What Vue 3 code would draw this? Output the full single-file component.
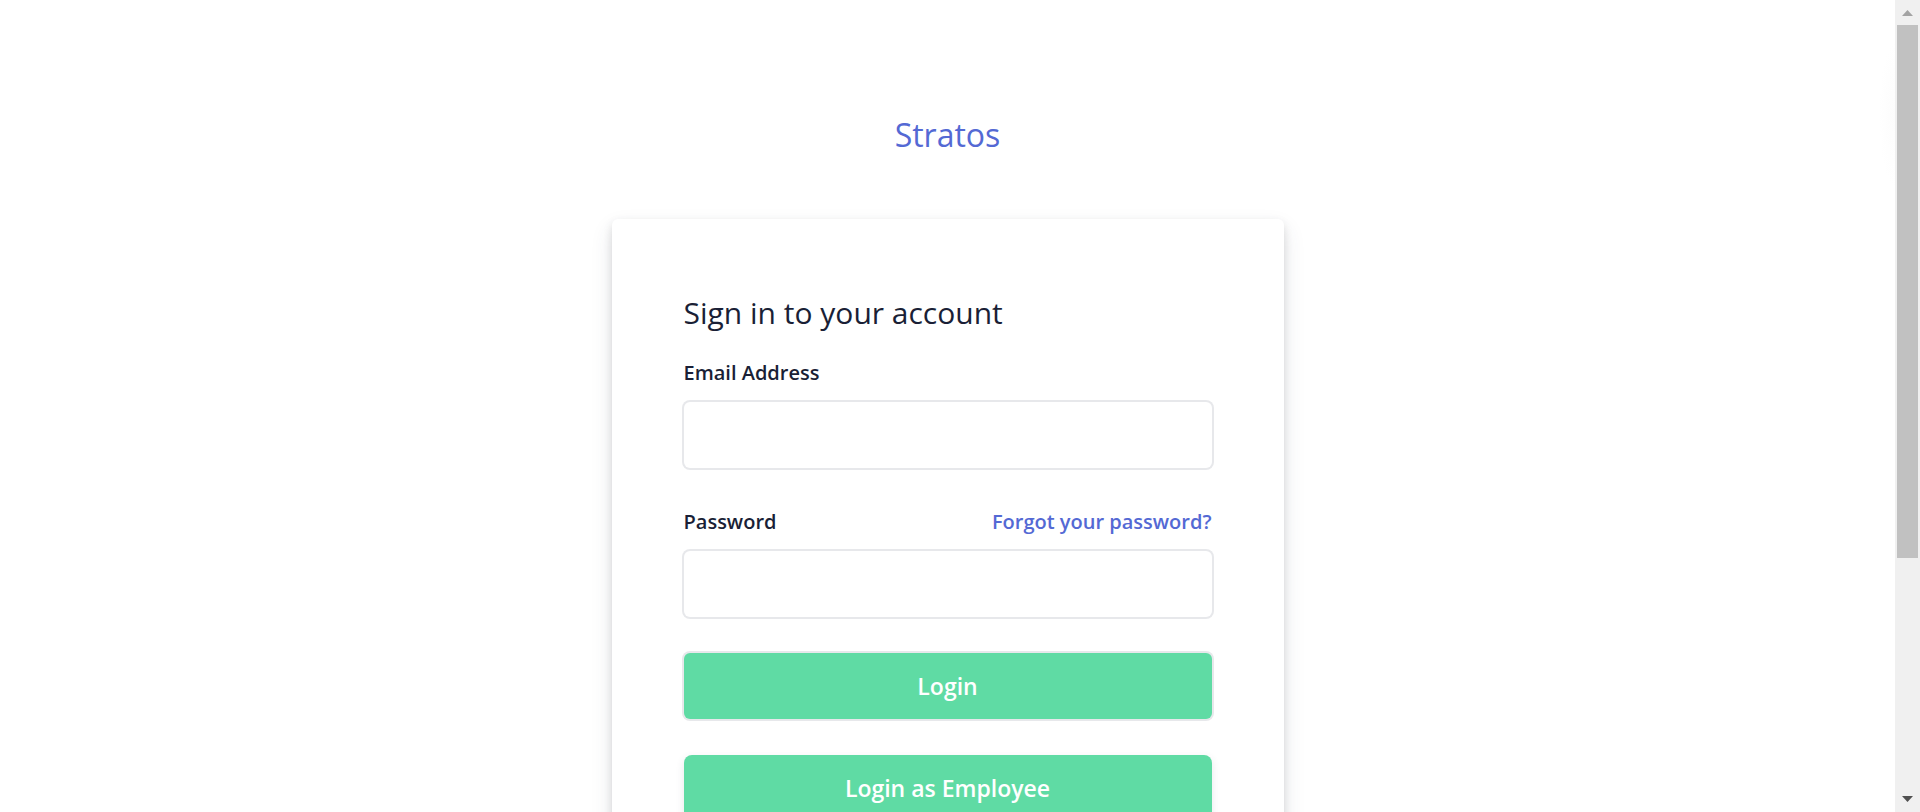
<script setup>
import { ref } from 'vue'

const email = ref('')
const password = ref('')
</script>

<template>
  <div class="window">
    <main class="page">
      <h1 class="brand"><a href="#">Stratos</a></h1>
      <section class="card">
        <h2 class="title">Sign in to your account</h2>
        <form class="form" @submit.prevent>
          <div class="field">
            <div class="label-row">
              <label for="email">Email Address</label>
            </div>
            <input id="email" v-model="email" class="box" type="email" name="email" />
          </div>
          <div class="field">
            <div class="label-row">
              <label for="password">Password</label>
              <a class="forgot" href="#">Forgot your password?</a>
            </div>
            <input id="password" v-model="password" class="box" type="password" name="password" />
          </div>
          <button class="btn ringed" type="submit">Login</button>
          <button class="btn" type="button">Login as Employee</button>
        </form>
      </section>
    </main>
    <div class="scrollbar" aria-hidden="true">
      <svg class="arrow" width="25" height="25" viewBox="0 0 25 25">
        <path d="M7 16 12.500 10 18 16Z" fill="#a3a3a3" />
      </svg>
      <div class="track"><div class="thumb"></div></div>
      <svg class="arrow" width="25" height="25" viewBox="0 0 25 25">
        <path d="M7 9 12.500 15 18 9Z" fill="#505050" />
      </svg>
    </div>
  </div>
</template>

<style>
html,
body {
  background: #fff;
}
</style>

<style scoped>
.window {
  display: flex;
  height: 100vh;
  overflow: hidden;
  font-family: "Open Sans", "Noto Sans", sans-serif;
  color: #1a1f36;
}

.page {
  flex: 1;
  display: flex;
  flex-direction: column;
  align-items: center;
  padding: 108px 24px 0;
  background: radial-gradient(16px 72px at 100% 115px, #fcfcfc, #fff) #fff;
}

.brand {
  margin: 0 0 57px;
  font-size: 32px;
  line-height: 54px;
  font-weight: 400;
}

.brand a,
.forgot {
  color: #5469d4;
  text-decoration: none;
}

.card {
  flex-shrink: 0;
  box-sizing: border-box;
  width: 100%;
  max-width: 672px;
  padding: 72px;
  border-radius: 6px;
  background: #fff;
  box-shadow: 0 10px 22px rgba(60, 66, 87, 0.12), 0 4px 10px rgba(0, 0, 0, 0.12);
}

.title {
  margin: 0 0 20px;
  font-size: 30px;
  line-height: 44px;
  font-weight: 400;
}

.form {
  display: flex;
  flex-direction: column;
  gap: 36px;
}

.label-row {
  display: flex;
  justify-content: space-between;
  margin-bottom: 12px;
  font-size: 20px;
  line-height: 35px;
  font-weight: 600;
}

.box {
  display: block;
  box-sizing: border-box;
  width: 100%;
  height: 66px;
  padding: 12px 24px;
  border: 0;
  border-radius: 6px;
  outline: 0;
  background: #fff;
  box-shadow: 0 0 0 2px rgba(60, 66, 87, 0.12);
  font: inherit;
  font-size: 24px;
}

.btn {
  height: 66px;
  border: 0;
  border-radius: 8px;
  background: #5fdba4;
  box-shadow: 0 3px 8px rgba(60, 66, 87, 0.12);
  color: #fff;
  font: inherit;
  font-size: 23px;
  font-weight: 600;
  cursor: pointer;
}

.ringed {
  border-radius: 6px;
  box-shadow: 0 0 0 2px rgba(60, 66, 87, 0.12);
}

.scrollbar {
  display: flex;
  flex-direction: column;
  width: 25px;
  background: #f0f0f0;
}

.arrow {
  display: block;
}

.track {
  flex: 1;
  padding: 0 2px;
}

.thumb {
  height: 70%;
  background: #c1c1c1;
}
</style>
